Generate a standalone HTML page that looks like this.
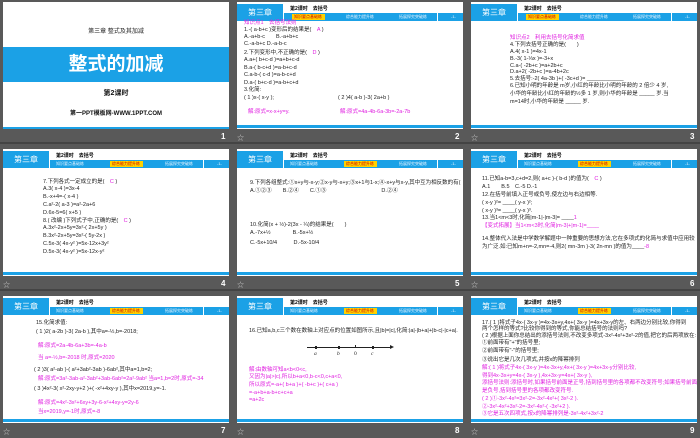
<!DOCTYPE html>
<html><head><meta charset="utf-8"><style>
*{margin:0;padding:0;box-sizing:border-box}
body{width:700px;height:438px;background:#595959;position:relative;overflow:hidden;font-family:"Liberation Sans","Noto Sans CJK SC",sans-serif}
.band{position:absolute;left:0;width:700px;height:2px;background:#444}
.s{position:absolute;width:226px;height:127px;background:#fff;overflow:hidden}
.bl{position:absolute;left:0;top:123px;width:226px;height:3px;background:#1ba1e6}
.ch{position:absolute;left:0;top:2px;width:46px;height:17px;background:#1ba1e6;color:#fff;font-size:8px;line-height:17px;text-align:center}
.tt{position:absolute;left:53px;top:3px;font-size:5px;font-weight:bold;color:#000;white-space:nowrap}
.nav{position:absolute;left:47px;top:11px;width:179px;height:8px;background:#1ba1e6}
.nav span{position:absolute;top:1px;font-size:4px;line-height:6px;color:#e8f4ff;white-space:nowrap}
.nav .sep{position:absolute;top:0;width:1px;height:8px;background:#fff}
.nav .hl{position:absolute;top:1px;width:33px;height:6px;background:#ffd200}
.l{position:absolute;font-size:5.5px;line-height:6px;white-space:nowrap;color:#222}
.p{color:#e020e0}
.num{position:absolute;color:#fff;font-size:8px;font-weight:bold}
.ic{position:absolute;color:#ccc;font-size:7px}
</style></head><body>
<div class="band" style="top:142px"></div>
<div class="band" style="top:289px"></div>

<!-- Slide 1 -->
<div class="s" style="left:3px;top:2px">
<div class="l" style="left:0;width:226px;text-align:center;top:27px;font-size:6px;color:#222">第三章 整式及其加减</div>
<div style="position:absolute;left:0;top:45px;width:226px;height:35px;background:#1ba1e6;color:#fff;font-size:19px;font-weight:bold;text-align:center;line-height:35px">整式的加减</div>
<div class="l" style="left:0;width:226px;text-align:center;top:89px;font-size:7px;font-weight:bold;color:#111">第2课时</div>
<div class="l" style="left:0;width:226px;text-align:center;top:109px;font-size:6px;font-weight:bold;color:#111">第一PPT模板网-WWW.1PPT.COM</div>
<div class="bl" style="top:125px;height:2px"></div>
</div>
<div class="num" style="left:221px;top:132px">1</div>

<!-- template header macro copies -->
<!-- Slide 2 -->
<div class="s" style="left:237px;top:2px">
<div class="ch">第三章</div><div class="tt">第2课时　去括号</div>
<div class="nav"><div class="hl" style="left:8px"></div><span style="left:10px;color:#c00">知识要点基础练</span><span style="left:62px">综合能力提升练</span><span style="left:115px">拓展探究突破练</span><div class="sep" style="left:153px"></div><span style="left:167px">-1-</span></div>
<div class="l p" style="left:7px;top:18px">知识点1　去括号法则</div>
<div class="l" style="left:7px;top:25px">1.-( a-b+c )变形后的结果是(　<span class="p">A</span> )</div>
<div class="l" style="left:7px;top:32px">A.-a+b-c　　B.-a+b+c</div>
<div class="l" style="left:7px;top:39px">C.-a-b+c D.-a-b-c</div>
<div class="l" style="left:7px;top:48px">2.下列变形中,不正确的是(　<span class="p">D</span> )</div>
<div class="l" style="left:7px;top:55px">A.a+( b+c-d )=a+b+c-d</div>
<div class="l" style="left:7px;top:63px">B.a-( b-c+d )=a-b+c-d</div>
<div class="l" style="left:7px;top:70px">C.a-b-( c-d )=a-b-c+d</div>
<div class="l" style="left:7px;top:78px">D.a-( b+c-d )=a-b+c+d</div>
<div class="l" style="left:7px;top:85px">3.化简:</div>
<div class="l" style="left:7px;top:93px">( 1 )x-( x-y );</div>
<div class="l" style="left:101px;top:93px">( 2 )4( a-b )-3( 2a+b )</div>
<div class="l p" style="left:11px;top:107px">解:原式=x-x+y=y.</div>
<div class="l p" style="left:103px;top:107px">解:原式=4a-4b-6a-3b=-2a-7b</div>
<div class="bl"></div>
</div>
<div class="ic" style="left:237px;top:133px">☆</div><div class="num" style="left:455px;top:132px">2</div>

<!-- Slide 3 -->
<div class="s" style="left:471px;top:2px">
<div class="ch">第三章</div><div class="tt">第2课时　去括号</div>
<div class="nav"><div class="hl" style="left:8px"></div><span style="left:10px;color:#c00">知识要点基础练</span><span style="left:62px">综合能力提升练</span><span style="left:115px">拓展探究突破练</span><div class="sep" style="left:153px"></div><span style="left:167px">-1-</span></div>
<div class="l p" style="left:39px;top:33px">知识点2　利用去括号化简求值</div>
<div class="l" style="left:39px;top:40px">4.下列去括号正确的是(　　)</div>
<div class="l" style="left:39px;top:47px">A.4( x-1 )=4x-1</div>
<div class="l" style="left:39px;top:54px">B.-3( 1-⅓x )=-3+x</div>
<div class="l" style="left:39px;top:61px">C.a-( -2b+c )=a+2b+c</div>
<div class="l" style="left:39px;top:67px">D.a+2( -2b+c )=a-4b+2c</div>
<div class="l" style="left:39px;top:74px">5.去括号:-2( 4a-3b )+( -3c+d )= ____________</div>
<div class="l" style="left:39px;top:81px">6.已知小明的年龄是 m岁,小红的年龄比小明的年龄的 2 倍少 4 岁,</div>
<div class="l" style="left:39px;top:89px">小华的年龄比小红的年龄的½多 1 岁,则小华的年龄是 _____ 岁.当</div>
<div class="l" style="left:39px;top:97px">m=14时,小华的年龄是 _____ 岁.</div>
<div class="bl"></div>
</div>
<div class="ic" style="left:471px;top:133px">☆</div><div class="num" style="left:690px;top:132px">3</div>

<!-- Slide 4 -->
<div class="s" style="left:3px;top:149px">
<div class="ch">第三章</div><div class="tt">第2课时　去括号</div>
<div class="nav"><div class="hl" style="left:60px"></div><span style="left:6px">知识要点基础练</span><span style="left:62px;color:#c00">综合能力提升练</span><span style="left:115px">拓展探究突破练</span><div class="sep" style="left:153px"></div><span style="left:167px">-1-</span></div>
<div class="l" style="left:40px;top:30px">7.下列各式一定成立的是(　<span class="p">C</span> )</div>
<div class="l" style="left:40px;top:37px">A.3( x-4 )=3x-4</div>
<div class="l" style="left:40px;top:45px">B.-x+4=-( x-4 )</div>
<div class="l" style="left:40px;top:53px">C.a²-2( a-3 )=a²-2a+6</div>
<div class="l" style="left:40px;top:61px">D.6x-5=6( x+5 )</div>
<div class="l" style="left:40px;top:69px">8.( 改编 )下列式子中,正确的是(　<span class="p">C</span> )</div>
<div class="l" style="left:40px;top:76px">A.3x²-2x+5y=3x²-( 2x+5y )</div>
<div class="l" style="left:40px;top:84px">B.3x²-2x+5y=3x²-( 5y-2x )</div>
<div class="l" style="left:40px;top:92px">C.5x-3( 4x-y² )=5x-12x+3y²</div>
<div class="l" style="left:40px;top:100px">D.5x-3( 4x-y² )=5x-12x-y²</div>
<div class="bl"></div>
</div>
<div class="ic" style="left:3px;top:280px">☆</div><div class="num" style="left:221px;top:279px">4</div>

<!-- Slide 5 -->
<div class="s" style="left:237px;top:149px">
<div class="ch">第三章</div><div class="tt">第2课时　去括号</div>
<div class="nav"><div class="hl" style="left:60px"></div><span style="left:6px">知识要点基础练</span><span style="left:62px;color:#c00">综合能力提升练</span><span style="left:115px">拓展探究突破练</span><div class="sep" style="left:153px"></div><span style="left:167px">-1-</span></div>
<div class="l" style="left:13px;top:31px">9.下列各组整式:①x+y与-x-y;②x-y与-x+y;③x+1与1-x;④-x+y与x-y,其中互为相反数的有(　<span class="p">B</span> )</div>
<div class="l" style="left:13px;top:39px">A.①②③　　B.②④　　C.①③　　　　　　　　　　D.②④</div>
<div class="l" style="left:13px;top:73px">10.化简(x + ½)-2(3x - ¼)的结果是(　　)</div>
<div class="l" style="left:13px;top:81px">A.-7x+½　　　　B.-5x+½</div>
<div class="l" style="left:13px;top:91px">C.-5x+10/4　　　D.-5x-10/4</div>
<div class="bl"></div>
</div>
<div class="ic" style="left:237px;top:280px">☆</div><div class="num" style="left:455px;top:279px">5</div>

<!-- Slide 6 -->
<div class="s" style="left:471px;top:149px">
<div class="ch">第三章</div><div class="tt">第2课时　去括号</div>
<div class="nav"><div class="hl" style="left:60px"></div><span style="left:6px">知识要点基础练</span><span style="left:62px;color:#c00">综合能力提升练</span><span style="left:115px">拓展探究突破练</span><div class="sep" style="left:153px"></div><span style="left:167px">-1-</span></div>
<div class="l" style="left:11px;top:27px">11.已知a-b=3,c+d=2,则( a+c )-( b-d )的值为(　<span class="p">C</span> )</div>
<div class="l" style="left:11px;top:35px">A.1　　B.5　C.-5 D.-1</div>
<div class="l" style="left:11px;top:43px">12.在括号前填入正号或负号,使左边与右边相等.</div>
<div class="l" style="left:11px;top:51px">( x-y )²= ____( y-x )²;</div>
<div class="l" style="left:11px;top:59px">( x-y )³= ____( y-x )³.</div>
<div class="l" style="left:11px;top:66px">13.当1&lt;m&lt;3时,化简|m-1|-|m-3|= ____<span class="p">1</span></div>
<div class="l p" style="left:11px;top:74px">【变式拓展】当1&lt;m&lt;3时,化简|m-3|+|m-1|=____</div>
<div class="l" style="left:11px;top:87px">14.整体代入法是中学数学解题中一种重要的思想方法,它在多项式的化简与求值中应用较</div>
<div class="l" style="left:11px;top:95px">为广泛.如:已知m+n=-2,mn=-4,则2( mn-3m )-3( 2n-mn )的值为____<span class="p">-8</span></div>
<div class="bl"></div>
</div>
<div class="ic" style="left:471px;top:280px">☆</div><div class="num" style="left:690px;top:279px">6</div>

<!-- Slide 7 -->
<div class="s" style="left:3px;top:296px">
<div class="ch">第三章</div><div class="tt">第2课时　去括号</div>
<div class="nav"><div class="hl" style="left:60px"></div><span style="left:6px">知识要点基础练</span><span style="left:62px;color:#c00">综合能力提升练</span><span style="left:115px">拓展探究突破练</span><div class="sep" style="left:153px"></div><span style="left:167px">-1-</span></div>
<div class="l" style="left:33px;top:24px">15.化简求值:</div>
<div class="l" style="left:33px;top:33px">( 1 )2( a-2b )-3( 2a-b ),其中a=-½,b=-2018;</div>
<div class="l p" style="left:35px;top:47px">解:原式=2a-4b-6a+3b=-4a-b</div>
<div class="l p" style="left:35px;top:59px">当 a=-½,b=-2018 时,原式=2020</div>
<div class="l" style="left:31px;top:71px">( 2 )3( a²-ab )-( a²+3ab²-3ab )-6ab²,其中a=1,b=2;</div>
<div class="l p" style="left:35px;top:80px">解:原式=3a²-3ab-a²-3ab²+3ab-6ab²=2a²-9ab² 当a=1,b=2时,原式=-34</div>
<div class="l" style="left:31px;top:90px">( 3 )4x²-3( x²-2xy-y+2 )+( -x²+4xy-y ),其中x=2019,y=-1.</div>
<div class="l p" style="left:35px;top:104px">解:原式=4x²-3x²+6xy+3y-6-x²+4xy-y=2y-6</div>
<div class="l p" style="left:35px;top:113px">当x=2019,y=-1时,原式=-8</div>
<div class="bl"></div>
</div>
<div class="ic" style="left:3px;top:427px">☆</div><div class="num" style="left:221px;top:426px">7</div>

<!-- Slide 8 -->
<div class="s" style="left:237px;top:296px">
<div class="ch">第三章</div><div class="tt">第2课时　去括号</div>
<div class="nav"><div class="hl" style="left:60px"></div><span style="left:6px">知识要点基础练</span><span style="left:62px;color:#c00">综合能力提升练</span><span style="left:115px">拓展探究突破练</span><div class="sep" style="left:153px"></div><span style="left:167px">-1-</span></div>
<div class="l" style="left:12px;top:32px">16.已知a,b,c三个数在数轴上对应点的位置如图所示,且|b|=|c|,化简:|a|-|b+a|+|b-c|-|c+a|.</div>
<div style="position:absolute;left:70px;top:51px;width:84px;height:1px;background:#222"></div>
<div style="position:absolute;left:153px;top:49px;border-left:4px solid #222;border-top:2px solid transparent;border-bottom:2px solid transparent"></div>
<div style="position:absolute;left:78px;top:50px;width:2px;height:3px;background:#222"></div>
<div style="position:absolute;left:101px;top:50px;width:2px;height:3px;background:#222"></div>
<div style="position:absolute;left:118px;top:49px;width:1px;height:3px;background:#222"></div>
<div style="position:absolute;left:135px;top:50px;width:2px;height:3px;background:#222"></div>
<div class="l" style="left:77px;top:55px;font-style:italic;font-family:'Liberation Serif',serif">a</div>
<div class="l" style="left:100px;top:55px;font-style:italic;font-family:'Liberation Serif',serif">b</div>
<div class="l" style="left:117px;top:55px;font-family:'Liberation Serif',serif">0</div>
<div class="l" style="left:134px;top:55px;font-style:italic;font-family:'Liberation Serif',serif">c</div>
<div class="l p" style="left:12px;top:71px">解:由数轴可知a&lt;b&lt;0&lt;c,</div>
<div class="l p" style="left:12px;top:78px">又因为|a|&gt;|c|,所以b+a&lt;0,b-c&lt;0,c+a&lt;0,</div>
<div class="l p" style="left:12px;top:86px">所以原式=-a+( b+a )+( -b+c )+( c+a )</div>
<div class="l p" style="left:12px;top:94px">=-a+b+a-b+c+c+a</div>
<div class="l p" style="left:12px;top:101px">=a+2c</div>
<div class="bl"></div>
</div>
<div class="ic" style="left:237px;top:427px">☆</div><div class="num" style="left:455px;top:426px">8</div>

<!-- Slide 9 -->
<div class="s" style="left:471px;top:296px">
<div class="ch">第三章</div><div class="tt">第2课时　去括号</div>
<div class="nav"><div class="hl" style="left:60px"></div><span style="left:6px">知识要点基础练</span><span style="left:62px;color:#c00">综合能力提升练</span><span style="left:115px">拓展探究突破练</span><div class="sep" style="left:153px"></div><span style="left:167px">-1-</span></div>
<div class="l" style="left:11px;top:24px">17.( 1 )将式子4x-( 3x-y )=4x-3x+y,4x+( 3x-y )=4x+3x-y的左、右两边分别比较,你得到</div>
<div class="l" style="left:11px;top:30px">两个怎样的等式?比较你得到的等式,你能总结括号的法则吗?</div>
<div class="l" style="left:11px;top:37px">( 2 )根据上面你总结出的添括号法则,不改变多项式-3x²-4x²+3x²-2的值,把它的后两项放在:</div>
<div class="l" style="left:11px;top:44px">①前面带有"+"的括号里;</div>
<div class="l" style="left:11px;top:52px">②前面带有"-"的括号里;</div>
<div class="l" style="left:11px;top:61px">③说出它是几次几项式,并按x的降幂排列</div>
<div class="l p" style="left:11px;top:69px">解:( 1 )将式子4x-( 3x-y )=4x-3x+y,4x+( 3x-y )=4x+3x-y分别比较,</div>
<div class="l p" style="left:11px;top:77px">得到4x-3x+y=4x-( 3x-y ),4x+3x-y=4x+( 3x-y ),</div>
<div class="l p" style="left:11px;top:84px">添括号法则:添括号时,如果括号前面是正号,括到括号里的各项都不改变符号;如果括号前面</div>
<div class="l p" style="left:11px;top:92px">是负号,括到括号里的各项都改变符号.</div>
<div class="l p" style="left:11px;top:100px">( 2 )①-3x²-4x²=3x²-2=-3x²-4x²+( 3x²-2 ).</div>
<div class="l p" style="left:11px;top:108px">②-3x²-4x²+3x²-2=-3x²-4x²-( -3x²+2 ).</div>
<div class="l p" style="left:11px;top:115px">③它是五次四项式,按x的降幂排列是-3x²-4x²+3x²-2</div>
<div class="bl"></div>
</div>
<div class="ic" style="left:471px;top:427px">☆</div><div class="num" style="left:690px;top:426px">9</div>
</body></html>
